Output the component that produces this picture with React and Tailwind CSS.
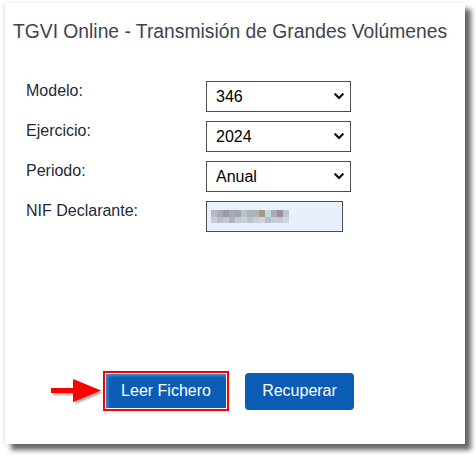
import React from "react";

const Chevron = () => (
  <svg width="10" height="7" viewBox="0 0 10 7" className="absolute right-[6px] top-[11px]">
    <path d="M1.3 1.3 L5 5 L8.7 1.3" stroke="#111" strokeWidth="2.3" fill="none" strokeLinecap="round" strokeLinejoin="round" />
  </svg>
);

const SelectBox = ({ value }) => (
  <div className="relative w-[145px] h-[31px] border border-[#4a4f55] bg-white pl-[9px] text-[16px] leading-[29px] text-black">
    {value}
    <Chevron />
  </div>
);

const blur = ["#b8b8c4","#a8aab6","#9c98a4","#a4a8b8","#9ca4b0","#b4c4c8","#a8b4b8","#b8b0b0","#a89888","#c0d8dc","#a8a8b8","#9c9090","#c0c4d0"];
const blur2 = ["#c8ccd4","#b8bcc8","#c4c8d0","#b0b4c0","#c4c8d4","#c8d0d4","#bcc0cc","#c8ccd4","#d0d4dc","#b8bccc","#c8ccd8","#c4c8d4","#d0d4dc"];

export default function App() {
  return (
    <div className="w-[476px] h-[455px] bg-white relative overflow-hidden" style={{ fontFamily: '"Liberation Sans", Arial, sans-serif' }}>
      <div className="absolute left-[5px] top-[3px] w-[460px] h-[441px] bg-white shadow-[6px_6px_5px_rgba(0,0,0,0.6),-1px_0_3px_rgba(0,0,0,0.12)]">
        <div className="pl-[8px] pt-[17px] text-[19.3px] leading-[24px] text-[#3d4450] whitespace-nowrap">
          TGVI Online - Transmisión de Grandes Volúmenes
        </div>
        <div className="mt-[37px] flex flex-col gap-[9px] pl-[21px]">
          {[["Modelo:", "346"], ["Ejercicio:", "2024"], ["Periodo:", "Anual"]].map(([l, v]) => (
            <div key={l} className="flex h-[31px]">
              <div className="w-[180px] text-[16px] leading-[18px] pt-[1px] text-[#1f2a36]">{l}</div>
              <SelectBox value={v} />
            </div>
          ))}
          <div className="flex h-[31px]">
            <div className="w-[180px] text-[16px] leading-[18px] pt-[1px] text-[#1f2a36]">NIF Declarante:</div>
            <div className="w-[137px] h-[31px] border border-[#4a4f55] bg-[#e8f0fe] flex flex-col justify-center pl-[4px]">
              <div className="flex">
                {blur.map((c, i) => (<div key={i} className="w-[6px] h-[7px]" style={{ background: c }} />))}
              </div>
              <div className="flex">
                {blur2.map((c, i) => (<div key={i} className="w-[6px] h-[6px]" style={{ background: c }} />))}
              </div>
            </div>
          </div>
        </div>
        <div className="mt-[139px] flex items-center pl-[46px]">
          <svg width="52" height="30" viewBox="0 0 52 30" className="drop-shadow-[2px_2px_1px_rgba(0,0,0,0.35)]">
            <rect x="0" y="12" width="24" height="5" fill="#ff0000" />
            <polygon points="22,3 50,14.5 22,26" fill="#ff0000" />
          </svg>
          <div className="border-[2px] border-[#ff0000] w-[126px] h-[40px] p-[1px]">
            <div className="w-full h-full bg-[#0b5cb5] text-white text-[16px] flex items-center justify-center shadow-[inset_2px_2px_3px_rgba(255,255,255,0.25)]">
              Leer Fichero
            </div>
          </div>
          <div className="ml-[16px] w-[109px] h-[37px] rounded-[4px] bg-[#0b5cb5] text-white text-[16px] flex items-center justify-center">
            Recuperar
          </div>
        </div>
      </div>
    </div>
  );
}
